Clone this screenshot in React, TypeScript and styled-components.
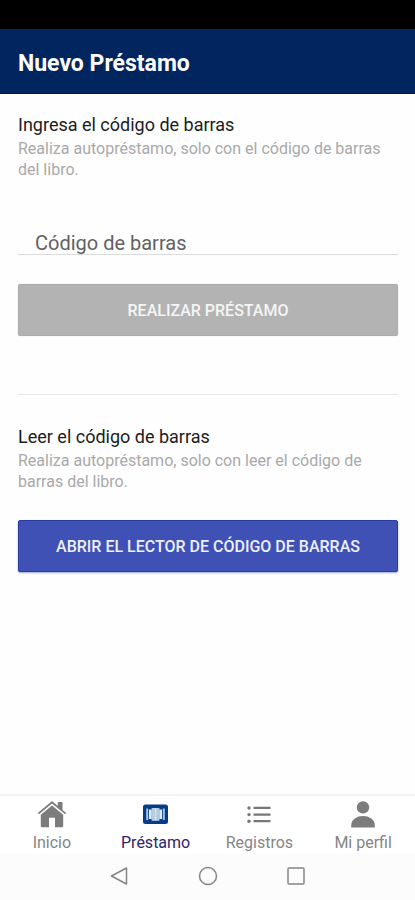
import React from "react";
import styled, { createGlobalStyle } from "styled-components";

const GlobalStyle = createGlobalStyle`
  * { box-sizing: border-box; }
  body {
    margin: 0;
    background: #fefefe;
    font-family: Roboto, "Liberation Sans", sans-serif;
  }
`;

const Screen = styled.div`
  display: flex;
  flex-direction: column;
  min-height: 100vh;
`;

const StatusBar = styled.div`
  height: 29px;
  background: #000;
`;

const Header = styled.header`
  display: flex;
  align-items: center;
  height: 65px;
  padding: 6px 18px 0;
  background: #00255f;
  border-bottom: 1px solid #001848;
`;

const Title = styled.h1`
  margin: 0;
  color: #fff;
  font-size: 23px;
  font-weight: 700;
  line-height: 28px;
`;

const Content = styled.main`
  flex: 1;
  padding: 19px 17px 0 18px;
`;

const Section = styled.section`
  display: flex;
  flex-direction: column;
`;

const SectionTitle = styled.h2`
  margin: 0 0 1px;
  color: #1c1c1c;
  font-size: 18px;
  font-weight: 400;
  line-height: 24px;
`;

const Hint = styled.p`
  margin: 0;
  color: #a9a9a9;
  font-size: 16px;
  line-height: 21px;
`;

const Field = styled.input`
  width: 100%;
  height: 26px;
  margin: 49px 0 29px;
  padding: 3px 17px 0;
  border: 0;
  border-bottom: 1px solid #dcdcdc;
  border-radius: 0;
  background: transparent;
  color: #555;
  font: 400 20px/22px Roboto, "Liberation Sans", sans-serif;
  outline: none;

  &::placeholder {
    color: #626262;
    opacity: 1;
  }
`;

const ActionButton = styled.button<{ $primary?: boolean }>`
  width: 100%;
  height: 52px;
  padding: 2px 8px 0;
  border: 1px solid ${(p) => (p.$primary ? "#2a3da2" : "#acacac")};
  border-radius: 2px;
  background: ${(p) => (p.$primary ? "#3f51b5" : "#b3b3b3")};
  box-shadow: ${(p) => (p.$primary ? "0 1px 2px #9aa5d8" : "0 0 1px #c4c4c4")};
  color: ${(p) => (p.$primary ? "#edf0ff" : "#f5f5f5")};
  font: 500 16px/20px Roboto, "Liberation Sans", sans-serif;
  text-transform: uppercase;
`;

const ReaderButton = styled(ActionButton)`
  margin-top: 28px;
`;

const Divider = styled.hr`
  width: 100%;
  margin: 58px 0 30px;
  border: 0;
  border-top: 1px solid #e8e8e8;
`;

const Tabs = styled.nav`
  display: grid;
  grid-template-columns: repeat(4, 1fr);
  height: 59px;
  border-top: 2px solid #f3f3f3;
  background: #fff;
`;

const Tab = styled.a<{ $active?: boolean }>`
  display: flex;
  flex-direction: column;
  align-items: center;
  padding-top: 4px;
  color: ${(p) => (p.$active ? "#30246e" : "#858585")};
  font-size: 16px;
  line-height: 20px;
  text-decoration: none;
  white-space: nowrap;

  svg {
    display: block;
    margin-bottom: 5px;
  }
`;

const SystemBar = styled.div`
  display: flex;
  justify-content: center;
  align-items: flex-start;
  gap: 64px;
  height: 47px;
  padding-top: 11px;
  background: #fcfcfc;
`;

const SystemButton = styled.button`
  display: block;
  width: 24px;
  height: 24px;
  padding: 0;
  border: 0;
  background: none;
  color: #858585;

  svg {
    display: block;
  }
`;

const HomeIcon = () => (
  <svg width="30" height="28" viewBox="0 0 30 28" fill="#7c7c7c" aria-hidden="true">
    <path d="M15 5.4 3.8 14.8v11c0 .9.5 1.5 1.4 1.5h6.8v-9.5h6v9.5h6.8c.9 0 1.4-.6 1.4-1.5v-11Z" />
    <path d="M15 1 .8 13l1.2 1.3L15 3.4l13 10.9 1.2-1.3-3.7-3.1V1.9h-4.7V6Z" />
  </svg>
);

const BarcodeIcon = () => (
  <svg width="30" height="28" viewBox="0 0 30 28" aria-hidden="true">
    <rect x="2" y="4.5" width="25" height="19.5" rx="2.5" fill="#063b86" />
    <path d="M5.2 8.5h2V20h-2ZM21.8 8.5h2V20h-2Z" fill="#a9c4e2" />
    <path d="M8 9.5h2.8V19H8ZM18.2 9.5H21V19h-2.8Z" fill="#dceaf5" />
    <path d="M10.6 8h7.8v12.8h-7.8Z" fill="#b5cce0" />
    <path d="M13.9 8.5h1.2v12h-1.2Z" fill="#d6e4ef" />
  </svg>
);

const ListIcon = () => (
  <svg width="30" height="28" viewBox="0 0 30 28" fill="#777" aria-hidden="true">
    <path d="M9.5 6.8h17v2.3h-17ZM9.5 13.4h17v2.3h-17ZM9.5 20h17v2.3h-17Z" />
    <circle cx="5" cy="8" r="1.7" />
    <circle cx="5" cy="14.6" r="1.7" />
    <circle cx="5" cy="21.2" r="1.7" />
  </svg>
);

const PersonIcon = () => (
  <svg width="30" height="28" viewBox="0 0 30 28" fill="#7c7c7c" aria-hidden="true">
    <circle cx="15" cy="7.4" r="6.2" />
    <path d="M3.2 27.4v-2.2C3.2 19.4 9 16 15 16s11.8 3.4 11.8 9.2v2.2Z" />
  </svg>
);

const tabs = [
  { label: "Inicio", Icon: HomeIcon },
  { label: "Préstamo", Icon: BarcodeIcon, active: true },
  { label: "Registros", Icon: ListIcon },
  { label: "Mi perfil", Icon: PersonIcon },
];

const systemKeys = [
  { label: "Atrás", shape: <path d="M18.5 4v16L3.5 12Z" strokeLinejoin="round" /> },
  { label: "Pantalla de inicio", shape: <circle cx="12" cy="12" r="8.5" /> },
  { label: "Recientes", shape: <rect x="4" y="4" width="16" height="16" rx="1" /> },
];

export default function App() {
  return (
    <>
      <GlobalStyle />
      <Screen>
        <StatusBar />
        <Header>
          <Title>Nuevo Préstamo</Title>
        </Header>
        <Content>
          <Section>
            <SectionTitle>Ingresa el código de barras</SectionTitle>
            <Hint>Realiza autopréstamo, solo con el código de barras del libro.</Hint>
            <Field type="text" placeholder="Código de barras" aria-label="Código de barras" />
            <ActionButton type="button">Realizar préstamo</ActionButton>
          </Section>
          <Divider />
          <Section>
            <SectionTitle>Leer el código de barras</SectionTitle>
            <Hint>Realiza autopréstamo, solo con leer el código de barras del libro.</Hint>
            <ReaderButton type="button" $primary>
              Abrir el lector de código de barras
            </ReaderButton>
          </Section>
        </Content>
        <Tabs>
          {tabs.map(({ label, Icon, active }) => (
            <Tab key={label} href="#" $active={active} aria-current={active ? "page" : undefined}>
              <Icon />
              {label}
            </Tab>
          ))}
        </Tabs>
        <SystemBar>
          {systemKeys.map(({ label, shape }) => (
            <SystemButton key={label} type="button" aria-label={label}>
              <svg width="24" height="24" viewBox="0 0 24 24" fill="none" stroke="currentColor" strokeWidth="1.5">
                {shape}
              </svg>
            </SystemButton>
          ))}
        </SystemBar>
      </Screen>
    </>
  );
}
